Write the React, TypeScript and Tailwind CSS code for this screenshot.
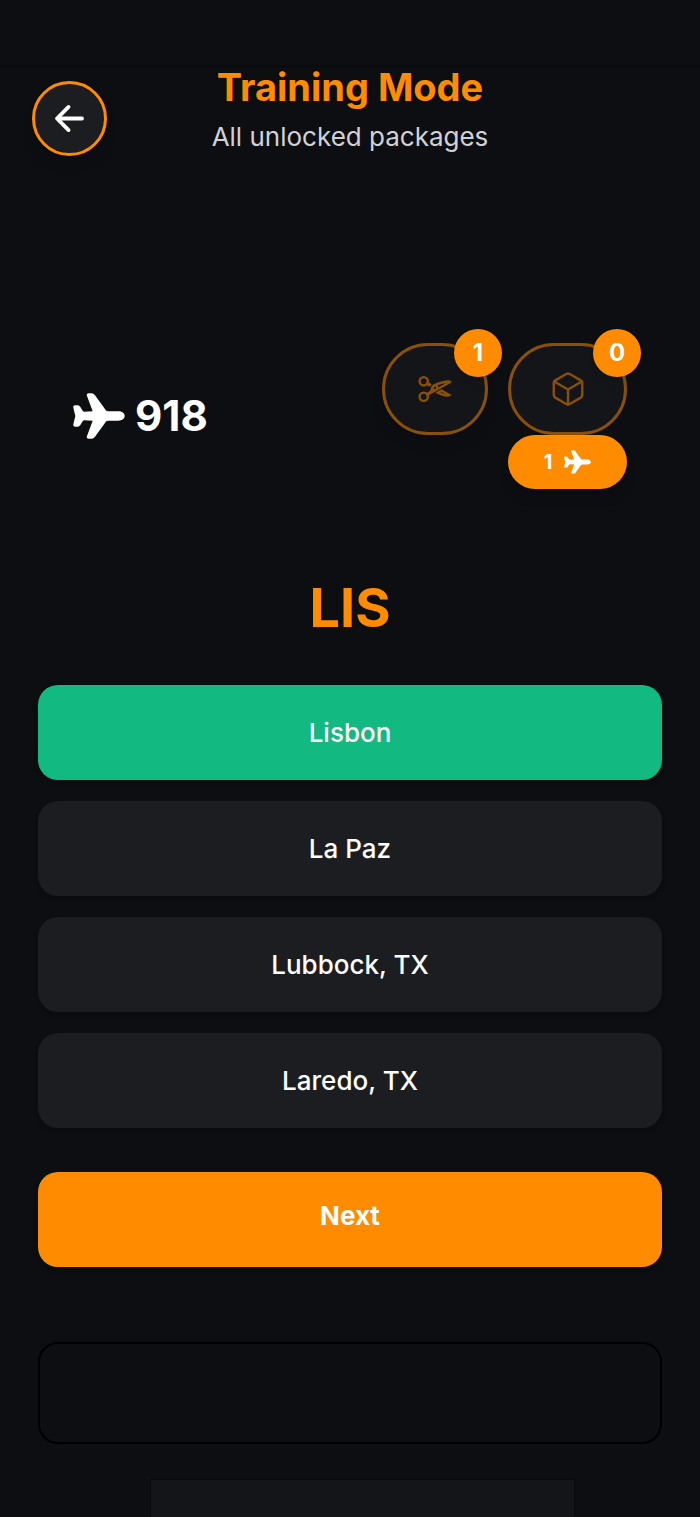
import { useState } from 'react';
import { IoArrowBack, IoCubeOutline, IoCutOutline } from 'react-icons/io5';

type Question = {
  code: string;
  answer: string;
  options: string[];
};

const question: Question = {
  code: 'LIS',
  answer: 'Lisbon',
  options: ['Lisbon', 'La Paz', 'Lubbock, TX', 'Laredo, TX'],
};

function Plane({ className }: { className?: string }) {
  return (
    <svg viewBox="0 0 156 136" fill="currentColor" aria-hidden="true" className={className}>
      <path d="M136 54H106Q101 54 98 50L66 6Q62 0 55 0H48Q39 0 42 8L59 54L34 55Q31 55 29 52L22 41Q19 36 14 36H7Q0 36 1 43L7 68L1 93Q0 100 7 100H14Q19 100 22 95L29 84Q31 81 34 81L59 82L42 128Q39 136 48 136H55Q62 136 66 130L98 86Q101 82 106 82H136C147 82 155 76 155 68S147 54 136 54Z" />
    </svg>
  );
}

function Header() {
  return (
    <header className="relative h-[277px] border-t border-[#08090b] text-center">
      <button
        type="button"
        aria-label="Back"
        className="absolute left-8 top-3.5 flex size-[75px] items-center justify-center rounded-full border-[3px] border-[#ff8c00] bg-[#1c1d20] text-white shadow-lg"
      >
        <IoArrowBack size={41} />
      </button>
      <h1 className="text-[38px] leading-10 font-bold text-[#ff8c00]">Training Mode</h1>
      <p className="mt-3 text-[26px] leading-9 text-[#d1d1d6]">All unlocked packages</p>
    </header>
  );
}

function Badge({ count }: { count: number }) {
  return (
    <span className="absolute -right-3.5 -top-3.5 flex size-12 items-center justify-center rounded-full bg-[#ff8c00] text-2xl font-bold text-white shadow-md">
      {count}
    </span>
  );
}

function Hints({ cuts, cubes, price }: { cuts: number; cubes: number; price: number }) {
  return (
    <div className="flex items-start gap-5">
      <div className="relative">
        <button
          type="button"
          aria-label="Remove options"
          className="flex h-[92px] w-[106px] items-center justify-center rounded-[46px] border-[3px] border-[#88500b] bg-[#141518] text-[#88500b] shadow-lg"
        >
          <IoCutOutline size={38} />
        </button>
        <Badge count={cuts} />
      </div>
      <div className="relative">
        <button
          type="button"
          aria-label="Open package"
          className="flex h-[92px] w-[119px] items-center justify-center rounded-[46px] border-[3px] border-[#88500b] bg-[#141518] text-[#88500b]"
        >
          <IoCubeOutline size={38} />
        </button>
        <Badge count={cubes} />
        <button
          type="button"
          className="flex h-[54px] w-full items-center justify-center gap-3 rounded-full bg-[#ff8c00] text-xl font-bold text-white shadow-lg"
        >
          {price}
          <Plane className="h-6 w-[27px]" />
        </button>
      </div>
    </div>
  );
}

function App() {
  const [selected, setSelected] = useState<string | null>('Lisbon');

  return (
    <div className="flex min-h-screen flex-col bg-[#0d0e11] pt-[66px] font-['Inter','Liberation_Sans',sans-serif]">
      <Header />

      <section className="flex items-center justify-between px-[73px]">
        <div className="flex items-center gap-2.5 text-white">
          <Plane className="h-[46px] w-[52px]" />
          <span className="text-[42px] leading-[44px] font-bold">918</span>
        </div>
        <Hints cuts={1} cubes={0} price={1} />
      </section>

      <main className="flex flex-col px-[38px]">
        <h2 className="mt-[89px] text-center text-[54px] leading-[60px] font-bold text-[#ff8c00]">
          {question.code}
        </h2>

        <div className="mt-[47px] flex flex-col gap-[21px]">
          {question.options.map((option) => (
            <button
              key={option}
              type="button"
              onClick={() => setSelected(option)}
              className={`h-[95px] rounded-[20px] text-[26px] font-medium text-white shadow-md ${
                selected === option && option === question.answer ? 'bg-[#12b981]' : 'bg-[#1c1d20]'
              }`}
            >
              {option}
            </button>
          ))}
        </div>

        <button
          type="button"
          className="mt-11 h-[95px] rounded-[20px] bg-[#ff8c00] pb-2 text-[26px] font-bold text-white shadow-md"
        >
          Next
        </button>

        {/* empty slot under the answers */}
        <div className="mt-[75px] h-[102px] rounded-[20px] border-2 border-black" />
      </main>

      {/* bottom banner */}
      <footer className="mt-[35px] flex justify-center pl-[25px]">
        <div className="h-[38px] w-[63%] border border-b-0 border-[#08090b] bg-[#141518]" />
      </footer>
    </div>
  );
}

export default App;
